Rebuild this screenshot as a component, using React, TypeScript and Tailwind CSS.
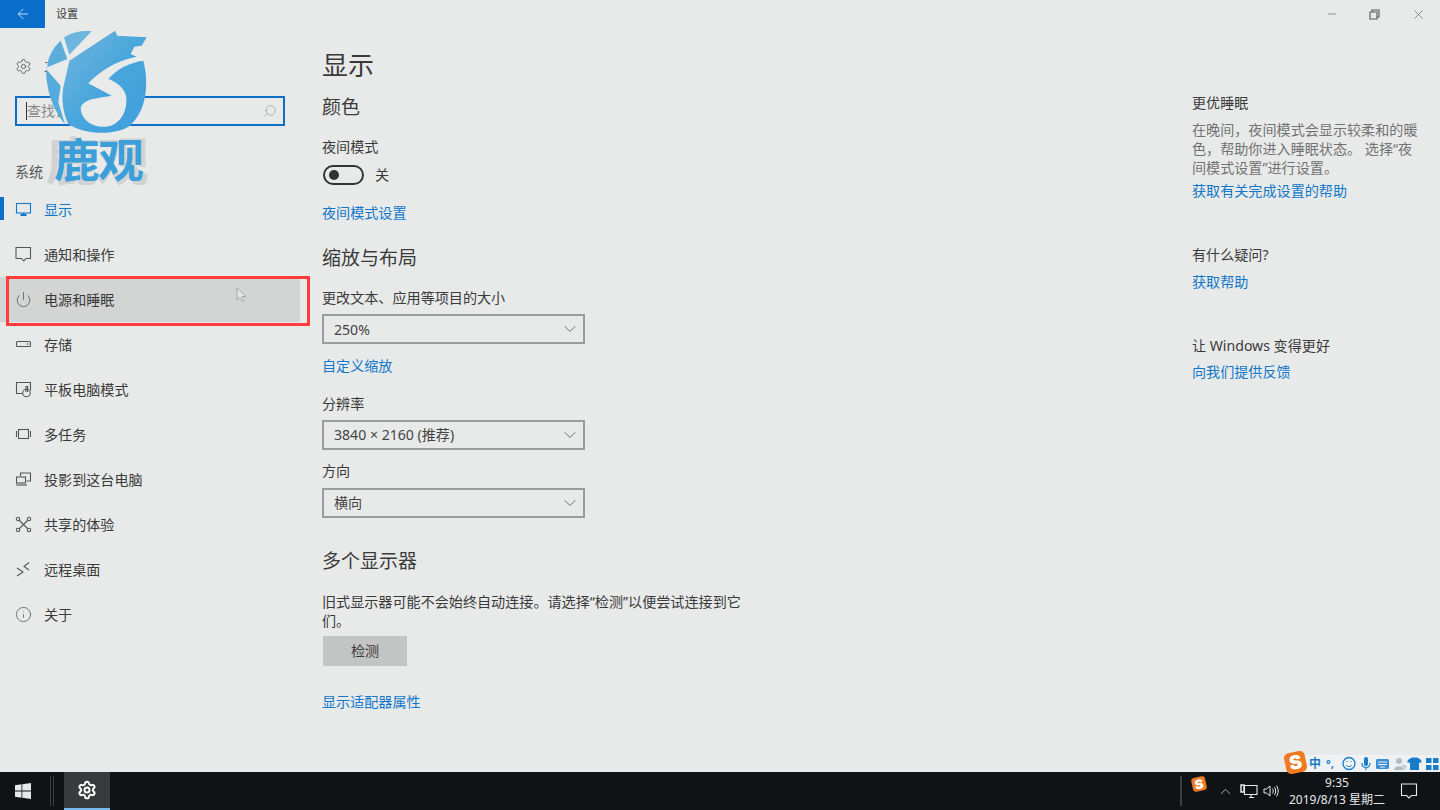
import React from "react";
import { ArrowLeft, ChevronDown, ChevronUp, Info, Minus, Power, Search, Settings, X } from "lucide-react";

const stroke = {
  fill: "none",
  stroke: "currentColor",
  strokeWidth: 1.1,
};

const MonitorIcon = () => (
  <svg width="17" height="17" viewBox="0 0 17 17" {...stroke}>
    <rect x="1.5" y="2.5" width="14" height="9.5" />
    <path d="M5.5 14h6M8.5 12v2" strokeWidth="2" />
  </svg>
);
const BubbleIcon = () => (
  <svg width="17" height="17" viewBox="0 0 17 17" {...stroke}>
    <path d="M1 1.5h14.5v11h-4.5l-2.2 2.5-2.3-2.5H1z" />
  </svg>
);
const StorageIcon = () => (
  <svg width="17" height="17" viewBox="0 0 17 17" {...stroke}>
    <rect x="1.5" y="5.5" width="14" height="5" rx="1" />
    <path d="M11.5 8h2" />
  </svg>
);
const TabletIcon = () => (
  <svg width="17" height="17" viewBox="0 0 17 17" {...stroke}>
    <path d="M8 12.5H1.5v-11h14v8" />
    <circle cx="11.5" cy="12" r="3.8" />
    <path d="M11 11V5.5h1.6V11" />
  </svg>
);
const MultitaskIcon = () => (
  <svg width="17" height="17" viewBox="0 0 17 17" {...stroke}>
    <rect x="3.5" y="3.5" width="10" height="9" />
    <path d="M1.5 5v6M15.5 5v6" />
  </svg>
);
const ProjectIcon = () => (
  <svg width="17" height="17" viewBox="0 0 17 17" {...stroke}>
    <path d="M5.5 5V2h10v8h-4" />
    <rect x="1.5" y="6" width="9" height="6" />
    <path d="M1 14h11" />
  </svg>
);
const ShareIcon = () => (
  <svg width="17" height="17" viewBox="0 0 17 17" {...stroke}>
    <path d="M4 4l9 9M13 4l-9 9" />
    <circle cx="3" cy="3" r="1.7" fill="#e8eaea" />
    <circle cx="14" cy="3" r="1.7" fill="#e8eaea" />
    <circle cx="3" cy="14" r="1.7" fill="#e8eaea" />
    <circle cx="14" cy="14" r="1.7" fill="#e8eaea" />
  </svg>
);
const RemoteIcon = () => (
  <svg width="17" height="17" viewBox="0 0 17 17" {...stroke}>
    <path d="M2 7l6 4-6 4M14 1.5L9 5.5l5 3.5" />
  </svg>
);

const navItems = [
  { label: "显示", icon: <MonitorIcon />, active: true },
  { label: "通知和操作", icon: <BubbleIcon /> },
  { label: "电源和睡眠", icon: <Power size={17} strokeWidth={1.1} />, hover: true },
  { label: "存储", icon: <StorageIcon /> },
  { label: "平板电脑模式", icon: <TabletIcon /> },
  { label: "多任务", icon: <MultitaskIcon /> },
  { label: "投影到这台电脑", icon: <ProjectIcon /> },
  { label: "共享的体验", icon: <ShareIcon /> },
  { label: "远程桌面", icon: <RemoteIcon /> },
  { label: "关于", icon: <Info size={17} strokeWidth={1.1} /> },
];

const Dropdown = ({ value, className, textClass = "" }: { value: string; className: string; textClass?: string }) => (
  <div className={`flex h-[30px] w-[263px] items-center justify-between border-2 border-[#9b9d9d] pl-[10px] pr-[3px] text-[#444] ${className}`}>
    <span className={textClass}>{value}</span>
    <ChevronDown size={20} strokeWidth={0.9} className="text-[#444]" />
  </div>
);

// traced from the watermark, viewBox is 3x the on-screen size
const Logo = () => (
  <svg width="115" height="170" viewBox="0 0 345 510" className="absolute left-[40px] top-[24px]">
    <defs>
      <linearGradient id="wm" x1="0" y1="0" x2="1" y2="1">
        <stop offset="0" stopColor="#74b8dc" />
        <stop offset="0.5" stopColor="#4aa6dc" />
        <stop offset="1" stopColor="#3f9edb" />
      </linearGradient>
    </defs>
    <path
      d="M72 40C95 25 125 18 155 22L225 20L320 40L305 65L310 110C328 180 320 265 265 308C220 335 130 332 85 300C40 260 18 200 18 135C22 100 40 70 72 40Z"
      fill="#e9ebeb"
    />
    <path d="M72 40C95 25 125 18 155 22L88 92Z" fill="#6db5dc" />
    <path d="M62 50L82 105L22 130C22 100 40 70 62 50Z" fill="#5cadda" />
    <path d="M18 135L62 185L55 235L75 300C40 260 18 200 18 135Z" fill="#55abdc" />
    <path
      d="M225 20L232 35L320 40L305 65L283 68L272 90L290 98C230 110 180 140 145 178L215 215L175 222C140 226 122 240 122 255C125 290 160 312 198 308C240 304 265 260 258 215C252 192 232 175 205 165C230 135 270 115 310 110C328 180 320 265 265 308C220 335 130 332 85 300C70 270 63 230 70 190L88 110Z"
      fill="url(#wm)"
    />
  </svg>
);

const Watermark = () => (
  <div className="pointer-events-none absolute left-0 top-0">
    <Logo />
    <div className="absolute left-[46px] top-[133px] text-[52px] font-bold leading-[56px] tracking-[-1px] whitespace-nowrap text-[#d1d3d3]">
      鹿观
    </div>
    <div className="absolute left-[54px] top-[131px] text-[46px] font-bold leading-[56px] tracking-[-2px] whitespace-nowrap text-[#3c9fd9]">
      鹿观
    </div>
  </div>
);

const SogouBar = () => (
  <div className="absolute bottom-[38px] right-0 flex h-[17px] w-[155px] items-center bg-[#eef2f4] text-[#1a7cc8]">
    <div className="absolute left-0 top-[-3px] flex h-[21px] w-[21px] -rotate-12 items-center justify-center rounded-[5px] bg-[#ee7a22] font-['Inter',sans-serif] text-[19px] font-black leading-none text-white">
      S
    </div>
    <span className="absolute left-[24px] text-[12px] font-bold leading-none">中</span>
    <span className="absolute left-[41px] text-[11px] font-bold leading-none">°,</span>
    <svg width="155" height="17" viewBox="0 0 155 17" className="absolute left-0 top-0">
      <circle cx="64" cy="8.500" r="6" fill="none" stroke="#1a7cc8" strokeWidth="1.300" />
      <path d="M61 10c1.600 2 4.400 2 6 0M61.500 6.500h1M65.500 6.500h1" fill="none" stroke="#1a7cc8" />
      <rect x="79" y="2" width="4" height="9" rx="2" fill="#1a7cc8" />
      <path d="M77 8c0 6 8 6 8 0M81 13v2" fill="none" stroke="#1a7cc8" strokeWidth="1.200" />
      <rect x="91" y="4" width="13" height="10" rx="1.500" fill="#3a8fd2" />
      <path d="M93 7h9M93 9.500h9M95 12h5" stroke="#eef2f4" strokeWidth="1" />
      <circle cx="114" cy="6" r="3" fill="#b4bcc2" />
      <path d="M109 15c0-5 10-5 10 0z" fill="#b4bcc2" />
      <circle cx="119" cy="12" r="2.500" fill="#c8ced2" />
      <path d="M124 4l3-1.500h5l3 1.500 2 3-2.500 1-0.500-1v8h-9V7l-0.500 1L122 7z" fill="#1a7cc8" />
      <path d="M141 3h5.500v5H141zM148 3h5.500v5H148zM141 10h5.500v5H141zM148 10h5.500v5H148z" fill="#1a7cc8" />
    </svg>
  </div>
);

const Taskbar = () => (
  <div className="relative flex h-[38px] shrink-0 items-center bg-[#101316] text-[#e6e8e8]">
    <div className="flex w-[44px] items-center justify-center">
      <svg width="16" height="16" viewBox="0 0 16 16" fill="#e8e8e8" className="ml-[1px]">
        <path d="M0 2.300L6.500 1.300V7.600H0zM7.300 1.200L16 0V7.600H7.300zM0 8.400H6.500V14.700L0 13.700zM7.300 8.400H16V16L7.300 14.800z" />
      </svg>
    </div>
    <div className="ml-[6px] h-[30px] w-[4px] border-x border-[#3b3e40]" />
    <div className="ml-[10px] flex h-full w-[46px] items-center justify-center border-b-2 border-[#76b9ed] bg-[#383b3c]">
      <Settings size={20} strokeWidth={2.400} className="text-white" />
    </div>
    <div className="ml-auto flex h-full items-center">
      <div className="h-[30px] w-[2px] bg-[#3b3e40]" />
      <div className="ml-[10px] mb-[14px] flex h-[14px] w-[14px] -rotate-12 items-center justify-center rounded-[3px] bg-[#ee7a22] font-['Inter',sans-serif] text-[13px] font-black leading-none text-white">
        S
      </div>
      <ChevronUp size={17} strokeWidth={1} className="ml-[11px]" />
      <svg width="18" height="17" viewBox="0 0 18 17" fill="none" stroke="currentColor" strokeWidth="1.100" className="ml-[6px]">
        <path d="M4.500 2.500h12.500v9H4.500zM9 14.500h5M11 12v2.500" />
        <path d="M1 2h3v7H1z" strokeWidth="1.500" />
      </svg>
      <svg width="16" height="16" viewBox="0 0 16 16" fill="none" stroke="currentColor" strokeWidth="1" className="ml-[5px]">
        <path d="M1 6h2.500L7 3v10l-3.500-3H1zM9.500 5.500c1 1.500 1 3.500 0 5M11.500 4c1.600 2.500 1.600 5.500 0 8M13.500 2.500c2.200 3.500 2.200 7.500 0 11" />
      </svg>
      <div className="ml-[8px] flex w-[100px] flex-col items-center text-[12px] leading-[17px]">
        <span>9:35</span>
        <span className="whitespace-nowrap">2019/8/13 星期二</span>
      </div>
      <svg width="18" height="18" viewBox="0 0 18 18" fill="none" stroke="currentColor" strokeWidth="1.100" className="ml-[13px] mr-[22px]">
        <path d="M1.500 2h15v11.500h-5l-2.500 2.500-2.500-2.500h-5z" />
      </svg>
    </div>
  </div>
);

export default function App() {
  return (
    <div className="relative flex h-[810px] w-[1440px] flex-col overflow-hidden bg-[#e8eaea] font-['Noto_Sans','Noto_Sans_CJK_SC',sans-serif] text-[14.1px] text-[#3a3a3a]">
      <div className="flex h-[28px] shrink-0 items-center">
        <div className="flex h-[28px] w-[45px] items-center justify-center bg-[#0a6ecb] text-white">
          <ArrowLeft size={16} strokeWidth={1.100} />
        </div>
        <span className="ml-[11px] text-[11px]">设置</span>
        <div className="ml-auto flex items-center gap-[31px] pr-[14px] text-[#555]">
          <Minus size={12} strokeWidth={1.200} />
          <svg width="11" height="11" viewBox="0 0 11 11" fill="none" stroke="currentColor" strokeWidth="1.100">
            <path d="M1 3h7v7H1zM3 3V1h7v7H8" />
          </svg>
          <X size={15} strokeWidth={1} />
        </div>
      </div>

      <div className="flex min-h-0 flex-1">
        <aside className="w-[300px] shrink-0 pt-[28px]">
          <div className="flex h-[20px] items-center pl-[15px]">
            <Settings size={17} strokeWidth={1.100} className="mr-[12px] text-[#444]" />
            <span>主页</span>
          </div>
          <div className="ml-[15px] mt-[20px] flex h-[30px] w-[270px] items-center border-2 border-[#0f6fc6] pl-[9px] pr-[6px]">
            <span className="h-[18px] w-px bg-[#333]" />
            <span className="text-[#8a8a8a]">查找设置</span>
            <Search size={14} strokeWidth={1} className="ml-auto -scale-x-100 text-[#8a8a8a]" />
          </div>
          <div className="mt-[36px] h-[20px] pl-[15px] leading-[20px] text-[#555]">系统</div>
          <nav className="mt-[5px]">
            {navItems.map((item) => (
              <div
                key={item.label}
                className={`relative flex h-[45px] items-center pl-[15px] ${item.hover ? "bg-[#d3d5d4]" : ""} ${item.active ? "text-[#1177c8]" : ""}`}
              >
                {item.active && <span className="absolute left-0 top-[10px] h-[23px] w-[4px] bg-[#0f6fc6]" />}
                <span className={`mr-[12px] flex w-[17px] justify-center ${item.active ? "" : "text-[#555]"}`}>{item.icon}</span>
                <span>{item.label}</span>
                {item.hover && (
                  <>
                    <span className="absolute -bottom-[4px] left-[6px] -right-[10px] top-[-1px] border-[3px] border-[#ff3b3b]" />
                    <svg width="12" height="16" viewBox="0 0 12 16" className="absolute left-[236px] top-[10px]">
                      <path d="M1 1v12l3-2.500 2 4 2-1-2-4h4z" fill="#e4e6e6" stroke="#9a9c9c" strokeWidth="0.800" />
                    </svg>
                  </>
                )}
              </div>
            ))}
          </nav>
        </aside>

        <main className="flex min-w-0 flex-1 pl-[22px]">
          <section className="w-[425px] shrink-0 pt-[19px]">
            <h1 className="h-[36px] text-[26px] leading-[36px]">显示</h1>
            <h2 className="mt-[10px] h-[28px] text-[19px] leading-[28px]">颜色</h2>
            <div className="mt-[16px] h-[20px] leading-[20px]">夜间模式</div>
            <div className="mt-[8px] flex h-[20px] items-center">
              <div className="ml-px flex h-[20px] w-[41px] items-center rounded-full border-2 border-[#333] pl-[4px]">
                <span className="h-[10px] w-[10px] rounded-full bg-[#333]" />
              </div>
              <span className="ml-[11px]">关</span>
            </div>
            <div className="mt-[18px] h-[20px] leading-[20px] text-[#1177c8]">夜间模式设置</div>
            <h2 className="mt-[21px] h-[28px] text-[19px] leading-[28px]">缩放与布局</h2>
            <div className="mt-[16px] h-[20px] leading-[20px]">更改文本、应用等项目的大小</div>
            <Dropdown value="250%" className="mt-[6px]" textClass="translate-y-px" />
            <div className="mt-[12px] h-[20px] leading-[20px] text-[#1177c8]">自定义缩放</div>
            <div className="mt-[18px] h-[20px] leading-[20px]">分辨率</div>
            <Dropdown value="3840 × 2160 (推荐)" className="mt-[6px]" />
            <div className="mt-[11px] h-[20px] leading-[20px]">方向</div>
            <Dropdown value="横向" className="mt-[7px]" />
            <h2 className="mt-[29px] h-[28px] text-[19px] leading-[28px]">多个显示器</h2>
            <p className="mt-[17px] leading-[19px]">旧式显示器可能不会始终自动连接。请选择“检测”以便尝试连接到它们。</p>
            <div className="ml-px mt-[6px] flex h-[30px] w-[84px] items-center justify-center bg-[#c3c5c5]">检测</div>
            <div className="mt-[26px] h-[20px] leading-[20px] text-[#1177c8]">显示适配器属性</div>
          </section>

          <section className="ml-auto w-[248px] pt-[65px]">
            <div className="h-[20px] leading-[20px]">更优睡眠</div>
            <p className="mt-[7px] w-[230px] leading-[19px] text-[#727272]">
              在晚间，夜间模式会显示较柔和的暖色，帮助你进入睡眠状态。 选择“夜间模式设置”进行设置。
            </p>
            <div className="mt-[4px] h-[20px] leading-[20px] text-[#1177c8]">获取有关完成设置的帮助</div>
            <div className="mt-[44px] h-[20px] leading-[20px]">有什么疑问?</div>
            <div className="mt-[7px] h-[20px] leading-[20px] text-[#1177c8]">获取帮助</div>
            <div className="mt-[44px] h-[20px] leading-[20px]">让 Windows 变得更好</div>
            <div className="mt-[6px] h-[20px] leading-[20px] text-[#1177c8]">向我们提供反馈</div>
          </section>
        </main>
      </div>

      <Taskbar />
      <SogouBar />
      <Watermark />
    </div>
  );
}
